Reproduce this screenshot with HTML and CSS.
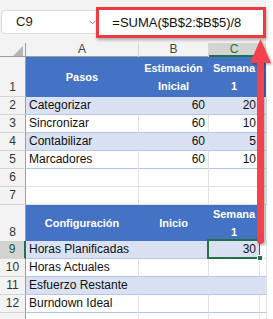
FILE: index.html
```html
<!DOCTYPE html>
<html lang="es">
<head>
    <meta charset="UTF-8">
    <meta name="viewport" content="width=device-width, initial-scale=1.0">
    <title>Burndown - SUMA</title>
    <link rel="stylesheet" href="styles.css">
</head>
<body>
    <div class="app">
        <div class="toolbar">
            <div class="name-box">
                <span>C9</span>
                <svg class="chevron" width="7" height="5" viewBox="0 0 7 5"><polyline points="0.5,0.8 3.5,3.8 6.5,0.8" fill="none" stroke="#777" stroke-width="1"/></svg>
            </div>
            <div class="formula-box">=SUMA($B$2:$B$5)/8</div>
        </div>

        <div class="sheet">
            <div class="row col-head">
                <div class="corner"><span class="corner-tri"></span></div>
                <div class="ch">A</div>
                <div class="ch">B</div>
                <div class="ch active">C</div>
                <div class="ch"></div>
            </div>

            <div class="row tall-1 hdr">
                <div class="rh">1</div>
                <div class="c">Pasos</div>
                <div class="c">Estimación<br>Inicial</div>
                <div class="c">Semana<br>1</div>
                <div class="c"></div>
            </div>
            <div class="row band">
                <div class="rh">2</div>
                <div class="c">Categorizar</div>
                <div class="c num">60</div>
                <div class="c num">20</div>
                <div class="c out"></div>
            </div>
            <div class="row tbl">
                <div class="rh">3</div>
                <div class="c">Sincronizar</div>
                <div class="c num">60</div>
                <div class="c num">10</div>
                <div class="c out"></div>
            </div>
            <div class="row band">
                <div class="rh">4</div>
                <div class="c">Contabilizar</div>
                <div class="c num">60</div>
                <div class="c num">5</div>
                <div class="c out"></div>
            </div>
            <div class="row tbl">
                <div class="rh">5</div>
                <div class="c">Marcadores</div>
                <div class="c num">60</div>
                <div class="c num">10</div>
                <div class="c out"></div>
            </div>
            <div class="row">
                <div class="rh">6</div>
                <div class="c"></div>
                <div class="c"></div>
                <div class="c"></div>
                <div class="c"></div>
            </div>
            <div class="row">
                <div class="rh">7</div>
                <div class="c"></div>
                <div class="c"></div>
                <div class="c"></div>
                <div class="c"></div>
            </div>

            <div class="row tall-8 hdr">
                <div class="rh">8</div>
                <div class="c">Configuración</div>
                <div class="c">Inicio</div>
                <div class="c">Semana<br>1</div>
                <div class="c out"></div>
            </div>
            <div class="row band">
                <div class="rh selected">9</div>
                <div class="c">Horas Planificadas</div>
                <div class="c"></div>
                <div class="c num sel">30<span class="handle"></span></div>
                <div class="c out"></div>
            </div>
            <div class="row tbl">
                <div class="rh">10</div>
                <div class="c">Horas Actuales</div>
                <div class="c"></div>
                <div class="c"></div>
                <div class="c"></div>
            </div>
            <div class="row band">
                <div class="rh">11</div>
                <div class="c">Esfuerzo Restante</div>
                <div class="c"></div>
                <div class="c"></div>
                <div class="c"></div>
            </div>
            <div class="row tbl">
                <div class="rh">12</div>
                <div class="c">Burndown Ideal</div>
                <div class="c"></div>
                <div class="c"></div>
                <div class="c"></div>
            </div>
            <div class="row">
                <div class="rh"></div>
                <div class="c"></div>
                <div class="c"></div>
                <div class="c"></div>
                <div class="c"></div>
            </div>
        </div>

        <svg class="arrow" width="273" height="319" viewBox="0 0 273 319">
            <defs>
                <filter id="shadow" x="-50%" y="-10%" width="200%" height="120%">
                    <feDropShadow dx="1.5" dy="1.5" stdDeviation="1.2" flood-color="#000" flood-opacity="0.3"/>
                </filter>
            </defs>
            <g filter="url(#shadow)" fill="#f3434b">
                <rect x="257" y="56" width="7" height="188" rx="3.5"/>
                <polygon points="260.5,39 250,63 271,63"/>
            </g>
        </svg>
    </div>
</body>
</html>
```

FILE: styles.css
```css
* {
    margin: 0;
    padding: 0;
    box-sizing: border-box;
}

body {
    font-family: "Liberation Sans", Arial, sans-serif;
    background: white;
    width: 273px;
    height: 319px;
    overflow: hidden;
}

.app {
    position: relative;
    width: 273px;
    height: 319px;
}

.toolbar {
    width: 266px;
    height: 43px;
    background: #f3f3f3;
    display: flex;
    align-items: center;
    padding-left: 1px;
}

.name-box {
    width: 99px;
    height: 24px;
    background: white;
    border: 1px solid #dcdcdc;
    border-radius: 4px;
    display: flex;
    align-items: center;
    justify-content: space-between;
    padding: 0 2px 0 14px;
    font-size: 13px;
    color: #222;
}

.chevron {
    margin-top: 2px;
}

.formula-box {
    position: relative;
    margin-left: -3px;
    width: 171px;
    height: 31px;
    margin-top: 1px;
    background: white;
    border: 3px solid #ee3b43;
    box-shadow: 1px 2px 3px rgba(0,0,0,0.3);
    padding-left: 13px;
    font-size: 13px;
    line-height: 25px;
    color: #111;
}

.sheet {
    width: 266px;
    background: white;
}

.row {
    display: grid;
    grid-template-columns: 26px 113px 70px 51px 6px;
    height: 18px;
}

.tall-1 {
    height: 40px;
}

.tall-8 {
    height: 36px;
}

.col-head {
    height: 14px;
    background: #f3f3f3;
    border-bottom: 1px solid #9e9e9e;
}

.corner {
    position: relative;
    border-right: 1px solid #9e9e9e;
}

.corner-tri {
    position: absolute;
    right: 2px;
    bottom: 1px;
    width: 0;
    height: 0;
    border-left: 10px solid transparent;
    border-bottom: 10px solid #b5b5b5;
}

.ch {
    font-size: 12px;
    line-height: 13px;
    color: #444;
    text-align: center;
    border-right: 1px solid #d6d6d6;
}

.ch.active {
    background: #d3d3d3;
    color: #217346;
    border-bottom: 2px solid #217346;
    line-height: 12px;
}

.rh {
    background: #f3f3f3;
    border-right: 1px solid #9e9e9e;
    border-bottom: 1px solid #d6d6d6;
    font-size: 12px;
    line-height: 17px;
    color: #333;
    display: flex;
    align-items: flex-end;
    justify-content: center;
}

.rh.selected {
    background: #d3d3d3;
    color: #1d5c39;
    border-right: 2px solid #217346;
}

.c {
    position: relative;
    border-right: 1px solid #e1e1e1;
    border-bottom: 1px solid #e1e1e1;
    font-size: 12px;
    line-height: 17px;
    color: #111;
    padding: 0 3px;
    white-space: nowrap;
    overflow: visible;
}

.num {
    text-align: right;
}

.tbl .c {
    border-bottom-color: #b4c6e7;
}

.band .c {
    background: #d9e1f2;
    border-right-color: transparent;
    border-bottom-color: #b4c6e7;
}

.tbl .c.out,
.band .c.out {
    background: white;
    border-right-color: #e1e1e1;
    border-bottom-color: #e1e1e1;
}

.hdr .c {
    background: #4472c4;
    color: white;
    font-weight: bold;
    font-size: 11px;
    line-height: 18px;
    text-align: center;
    border-right-color: transparent;
    border-bottom-color: #4472c4;
    display: flex;
    align-items: center;
    justify-content: center;
    padding: 0;
}

.hdr .c.out {
    background: white;
    border-right-color: #e1e1e1;
    border-bottom-color: #e1e1e1;
}

.sel::after {
    content: "";
    position: absolute;
    left: -2px;
    top: -2px;
    right: -2px;
    bottom: -1px;
    border: 2px solid #217346;
}

.handle {
    position: absolute;
    right: -4px;
    bottom: -3px;
    width: 6px;
    height: 6px;
    background: #217346;
    border: 1px solid white;
    z-index: 1;
}

.arrow {
    position: absolute;
    left: 0;
    top: 0;
    pointer-events: none;
}
```
